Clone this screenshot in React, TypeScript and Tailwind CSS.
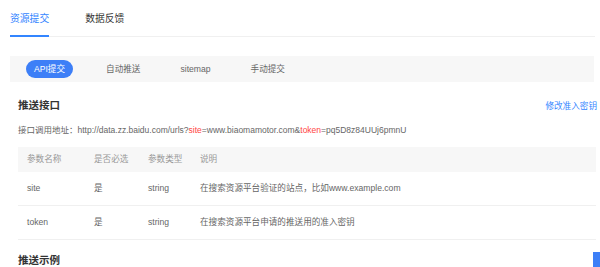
import React from "react";

const tabs = ["资源提交", "数据反馈"];
const subTabs = ["API提交", "自动推送", "sitemap", "手动提交"];

const rows = [
  { name: "site", required: "是", type: "string", desc: "在搜索资源平台验证的站点，比如www.example.com" },
  { name: "token", required: "是", type: "string", desc: "在搜索资源平台申请的推送用的准入密钥" },
];

const colWidths = ["w-[67px]", "w-[54px]", "w-[52px]", "flex-1"];

export default function App() {
  return (
    <div
      className="relative h-[267px] w-[600px] overflow-hidden bg-white text-[#666]"
      style={{ fontFamily: '"Liberation Sans", "Noto Sans CJK SC", sans-serif' }}
    >
      <div className="ml-[10px] mr-[5px] flex h-[37px] items-end gap-[36px] border-b border-[#f0f0f0]">
        {tabs.map((tab, i) => (
          <div
            key={tab}
            className={
              i === 0
                ? "-mb-px border-b-2 border-[#3385ff] pb-[9px] text-[9.8px] leading-[14px] text-[#3385ff]"
                : "-mb-px border-b-2 border-transparent pb-[9px] text-[9.8px] leading-[14px] text-[#333]"
            }
          >
            {tab}
          </div>
        ))}
      </div>

      <div className="ml-[10px] mr-[6px] mt-[19px] flex h-[26px] items-center gap-[26px] bg-[#f7f7f7] pl-[16px]">
        {subTabs.map((item, i) => (
          <div
            key={item}
            className={
              i === 0
                ? "flex h-[18px] items-center rounded-full bg-[#3d7ff7] px-[8px] text-[8.6px] text-white"
                : "flex h-[18px] items-center px-[7px] text-[8.6px] text-[#666]"
            }
          >
            {item}
          </div>
        ))}
      </div>

      <div className="pl-[18px] pr-[3px]">
        <div className="mt-[17px] flex h-[14px] items-center justify-between">
          <h3 className="text-[10.5px] font-bold text-[#333]">推送接口</h3>
          <a className="text-[8.6px] text-[#3385ff]">修改准入密钥</a>
        </div>

        <p className="mt-[11px] text-[8.5px] leading-[12px]">
          接口调用地址：http://data.zz.baidu.com/urls?
          <span className="text-[#f44]">site</span>=www.biaomamotor.com&amp;
          <span className="text-[#f44]">token</span>=pq5D8z84UUj6pmnU
        </p>

        <div className="mr-px mt-[11px] text-[8.6px]">
          <div className="flex h-[25px] items-center bg-[#f7f7f7] text-[#999]">
            {["参数名称", "是否必选", "参数类型", "说明"].map((h, i) => (
              <div key={h} className={`${colWidths[i]} pl-[9px]`}>
                {h}
              </div>
            ))}
          </div>
          {rows.map((row) => (
            <div key={row.name} className="flex h-[34px] items-center border-b border-[#f0f0f0]">
              <div className={`${colWidths[0]} pl-[9px]`}>{row.name}</div>
              <div className={`${colWidths[1]} pl-[9px]`}>{row.required}</div>
              <div className={`${colWidths[2]} pl-[9px]`}>{row.type}</div>
              <div className={`${colWidths[3]} pl-[9px]`}>{row.desc}</div>
            </div>
          ))}
        </div>

        <h3 className="mt-[13px] text-[10.5px] font-bold leading-[14px] text-[#333]">推送示例</h3>
      </div>

      <div className="absolute bottom-0 right-0 h-[15px] w-[7px] bg-[#3d7ff7]" />
    </div>
  );
}
